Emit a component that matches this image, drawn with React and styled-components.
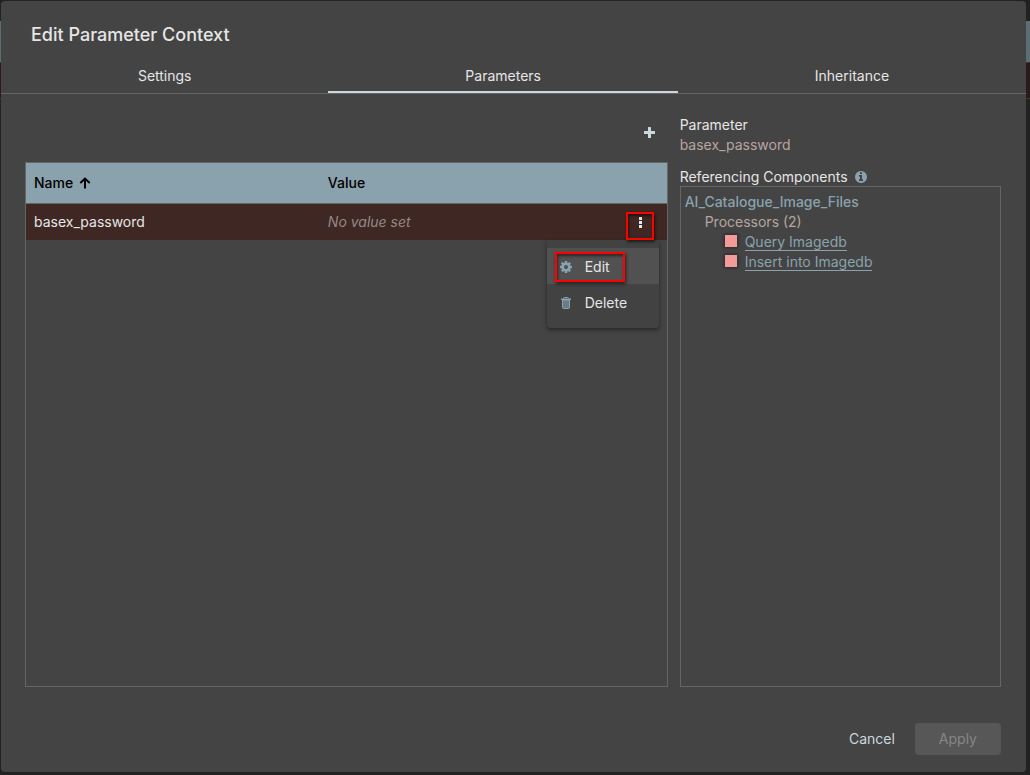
import React from 'react';
import styled, { createGlobalStyle } from 'styled-components';

const GlobalStyle = createGlobalStyle`
  *, *::before, *::after { box-sizing: border-box; }
  body {
    margin: 0;
    background: #222222;
    color: #e6e6e6;
    font-family: Inter, "Liberation Sans", sans-serif;
    font-size: 14px;
    line-height: 20px;
  }
  button { font: inherit; color: inherit; background: none; border: 0; padding: 0; }
`;

const Page = styled.div`
  position: relative;
  display: flex;
  min-height: 100vh;
  padding: 1px 4px 3px 1px;
`;

const Underlay = styled.div`
  position: absolute;
  inset: 0;
  padding-top: 21px;
`;

const UnderlayBar = styled.div`
  height: ${(p) => p.$height};
  background: ${(p) => p.$color};
  border-bottom: 1px solid #3a3a3a;
`;

const Dialog = styled.section`
  position: relative;
  flex: 1;
  display: flex;
  flex-direction: column;
  min-width: 0;
  background: #444444;
  border-radius: 4px;
`;

const Title = styled.h1`
  margin: 0;
  padding: 22px 30px 11px;
  font-size: 18px;
  line-height: 24px;
  font-weight: 500;
`;

const TabList = styled.div`
  display: flex;
  height: 36px;
  border-bottom: 1px solid #666666;
`;

const Tab = styled.button`
  flex: 1 1 auto;
  padding: 0 24px;
  border-top: 2px solid transparent;
  border-bottom: 2px solid ${(p) => (p['aria-selected'] ? '#cbd8dd' : 'transparent')};
`;

const Content = styled.div`
  flex: 1;
  display: grid;
  grid-template-columns: 2fr 1fr;
  gap: 12px;
  padding: 20px 25px 0 24px;
`;

const Column = styled.div`
  display: flex;
  flex-direction: column;
  min-width: 0;
`;

const Details = styled(Column)`
  padding-top: 1px;
`;

const Toolbar = styled.div`
  display: flex;
  justify-content: flex-end;
  margin-bottom: 12px;
`;

const IconButton = styled.button`
  display: flex;
  align-items: center;
  justify-content: center;
  width: 36px;
  height: 36px;
  color: #cbd8dd;
`;

const Listing = styled.div`
  flex: 1;
  border: 1px solid #666666;
`;

const Table = styled.table`
  width: 100%;
  table-layout: fixed;
  border-collapse: separate;
  border-spacing: 0;
`;

const HeadCell = styled.th`
  width: ${(p) => p.$width || 'auto'};
  height: 41px;
  padding: 0 8px;
  border-bottom: 1px solid #666666;
  background: #8aa2ae;
  color: #000000;
  font-weight: 500;
  text-align: left;
  svg { margin-left: 6px; vertical-align: -1px; }
`;

const Cell = styled.td`
  position: relative;
  height: 36px;
  padding: ${(p) => (p.$flush ? '0' : '0 8px')};
  background: #3f2723;
`;

const Unset = styled.span`
  font-style: italic;
  color: #938a88;
`;

const RowMenuButton = styled.button`
  display: flex;
  align-items: center;
  justify-content: center;
  width: 100%;
  height: 36px;
`;

const Menu = styled.div`
  position: absolute;
  z-index: 1;
  top: 100%;
  right: 8px;
  width: 112px;
  padding: 8px 0;
  background: #424242;
  border-radius: 0 0 4px 4px;
  box-shadow: 0 2px 4px rgba(0, 0, 0, 0.45);
`;

const MenuItem = styled.button`
  display: flex;
  align-items: center;
  gap: 12px;
  width: 100%;
  height: 36px;
  padding: 2px 12px 0;
  background: ${(p) => (p.$active ? '#515151' : 'none')};
  svg { color: #8aa2ae; }
`;

const Highlight = styled.span`
  position: absolute;
  z-index: 2;
  top: ${(p) => p.$top};
  left: ${(p) => p.$left};
  width: ${(p) => p.$width};
  height: ${(p) => p.$height};
  border: 2px solid #ff0000;
  box-shadow: 1px 2px 3px rgba(0, 0, 0, 0.6), inset 1px 2px 3px rgba(0, 0, 0, 0.5);
  pointer-events: none;
`;

const Field = styled.div`
  margin-bottom: 12px;
`;

const Muted = styled.div`
  color: #b8a5a0;
`;

const SectionLabel = styled.div`
  display: flex;
  align-items: center;
  gap: 6px;
  height: 19px;
  white-space: nowrap;
  svg { color: #8aa2ae; }
`;

const References = styled.div`
  flex: 1;
  padding: 5px 4px;
  border: 1px solid #666666;
`;

const GroupName = styled.div`
  color: #8aa2ae;
  font-weight: 500;
`;

const Indent = styled.div`
  padding-left: 20px;
`;

const ProcessorList = styled.ul`
  margin: 0;
  padding: 0 0 0 20px;
  list-style: none;
`;

const Processor = styled.li`
  display: flex;
  gap: 8px;
  height: 20px;
`;

const StoppedMark = styled.span`
  width: 12px;
  height: 12px;
  margin-top: 3px;
  background: #f49a9a;
  box-shadow: 0 0 3px 1px rgba(0, 0, 0, 0.4);
`;

const ProcessorLink = styled.a`
  height: 19px;
  color: #8aa2ae;
  text-decoration: none;
  border-bottom: 1px solid #8aa2ae;
`;

const Footer = styled.footer`
  display: flex;
  justify-content: flex-end;
  gap: 4px;
  padding: 36px 25px 17px 24px;
`;

const Action = styled.button`
  height: 32px;
  padding: 0 ${(p) => (p.disabled ? '24px' : '16px')};
  border-radius: 4px;
  color: ${(p) => (p.disabled ? '#868686' : '#cbd8dd')};
  background: ${(p) => (p.disabled ? '#575757' : 'none')};
`;

const PlusIcon = () => (
  <svg width="11" height="11" viewBox="0 0 11 11" fill="currentColor" aria-hidden="true">
    <path d="M4.5 0h2q.5 0 .5.5V4h3.500q.5 0 .5.5v2q0 .5-.5.5H7v3.500q0 .5-.5.5h-2q-.5 0-.5-.5V7H.5Q0 7 0 6.500v-2Q0 4 .5 4H4V.5Q4 0 4.500 0z" />
  </svg>
);

const SortIcon = () => (
  <svg width="12" height="12" viewBox="0 0 12 12" fill="none" stroke="currentColor" strokeWidth="2" aria-hidden="true">
    <path d="M6 11.500V2M1.300 6L6 1.600 10.700 6" />
  </svg>
);

const DotsIcon = () => (
  <svg width="3" height="11" viewBox="0 0 3 11" fill="currentColor" aria-hidden="true">
    <path d="M0 0h3v3H0zM0 4h3v3H0zM0 8h3v3H0z" />
  </svg>
);

const CogIcon = () => (
  <svg width="14" height="14" viewBox="0 0 1792 1792" fill="currentColor" aria-hidden="true">
    <path d="M1152 896q0-106-75-181t-181-75-181 75-75 181 75 181 181 75 181-75 75-181zm512-109v222q0 12-8 23t-20 13l-185 28q-19 54-39 91 35 50 107 138 10 12 10 25t-9 23q-27 37-99 108t-94 71q-12 0-26-9l-138-108q-44 23-91 38-16 136-29 186-7 28-36 28h-222q-14 0-24.500-8.500t-11.500-21.500l-28-184q-49-16-90-37l-141 107q-10 9-25 9-14 0-25-11-126-114-165-168-7-10-7-23 0-12 8-23 15-21 51-66.500t54-70.500q-27-50-41-99l-183-27q-13-2-21-12.500t-8-23.500v-222q0-12 8-23t19-13l186-28q14-46 39-92-40-57-107-138-10-12-10-24 0-10 9-23 26-36 98.500-107.500t94.500-71.500q13 0 26 10l138 107q44-23 91-38 16-136 29-186 7-28 36-28h222q14 0 24.500 8.500t11.500 21.500l28 184q49 16 90 37l142-107q9-9 24-9 13 0 25 10 129 119 165 170 7 8 7 22 0 12-8 23-15 21-51 66.500t-54 70.500q26 50 41 98l183 28q13 2 21 12.500t8 23.500z" />
  </svg>
);

const TrashIcon = () => (
  <svg width="14" height="14" viewBox="0 0 14 14" aria-hidden="true">
    <path d="M4.500 2.500Q4.500 1.500 5.500 1.500h3Q9.500 1.500 9.500 2.500" fill="none" stroke="currentColor" />
    <path d="M2 2.500h10v1.500H2z" fill="currentColor" />
    <path d="M3.500 4v7.500q0 1 1 1h5q1 0 1-1V4z" fill="currentColor" fillOpacity="0.6" stroke="currentColor" />
  </svg>
);

const InfoIcon = () => (
  <svg width="14" height="14" viewBox="0 0 1792 1792" fill="currentColor" aria-hidden="true">
    <path d="M1152 1376v-160q0-14-9-23t-23-9h-96v-512q0-14-9-23t-23-9h-320q-14 0-23 9t-9 23v160q0 14 9 23t23 9h96v320h-96q-14 0-23 9t-9 23v160q0 14 9 23t23 9h448q14 0 23-9t9-23zm-128-896v-160q0-14-9-23t-23-9h-192q-14 0-23 9t-9 23v160q0 14 9 23t23 9h192q14 0 23-9t9-23zm640 416q0 209-103 385.500t-279.500 279.500-385.500 103-385.500-103-279.500-279.500-103-385.500 103-385.500 279.500-279.500 385.500-103 385.500 103 279.500 279.500 103 385.500z" />
  </svg>
);

const tabs = ['Settings', 'Parameters', 'Inheritance'];
const processors = ['Query Imagedb', 'Insert into Imagedb'];

export default function App() {
  return (
    <Page>
      <GlobalStyle />
      <Underlay>
        <UnderlayBar $height="42px" $color="#5c6e75" />
        <UnderlayBar $height="36px" $color="#2a1a18" />
      </Underlay>
      <Dialog role="dialog" aria-labelledby="dialog-title">
        <Title id="dialog-title">Edit Parameter Context</Title>
        <TabList role="tablist">
          {tabs.map((name) => (
            <Tab key={name} type="button" role="tab" aria-selected={name === 'Parameters'}>
              {name}
            </Tab>
          ))}
        </TabList>
        <Content>
          <Column>
            <Toolbar>
              <IconButton type="button" aria-label="Add parameter"><PlusIcon /></IconButton>
            </Toolbar>
            <Listing>
              <Table>
                <thead>
                  <tr>
                    <HeadCell>Name<SortIcon /></HeadCell>
                    <HeadCell>Value</HeadCell>
                    <HeadCell $width="53px" aria-label="Actions" />
                  </tr>
                </thead>
                <tbody>
                  <tr>
                    <Cell>basex_password</Cell>
                    <Cell><Unset>No value set</Unset></Cell>
                    <Cell $flush>
                      <RowMenuButton type="button" aria-label="Row actions" aria-haspopup="menu">
                        <DotsIcon />
                      </RowMenuButton>
                      <Highlight $top="8px" $left="12px" $width="28px" $height="28px" />
                      <Menu role="menu">
                        <MenuItem type="button" role="menuitem" $active><CogIcon />Edit</MenuItem>
                        <MenuItem type="button" role="menuitem"><TrashIcon />Delete</MenuItem>
                        <Highlight $top="12px" $left="8px" $width="70px" $height="30px" />
                      </Menu>
                    </Cell>
                  </tr>
                </tbody>
              </Table>
            </Listing>
          </Column>
          <Details>
            <Field>
              <div>Parameter</div>
              <Muted>basex_password</Muted>
            </Field>
            <SectionLabel>Referencing Components<InfoIcon /></SectionLabel>
            <References>
              <GroupName>AI_Catalogue_Image_Files</GroupName>
              <Indent>
                <Muted>Processors (2)</Muted>
                <ProcessorList>
                  {processors.map((name) => (
                    <Processor key={name}>
                      <StoppedMark />
                      <ProcessorLink href="#">{name}</ProcessorLink>
                    </Processor>
                  ))}
                </ProcessorList>
              </Indent>
            </References>
          </Details>
        </Content>
        <Footer>
          <Action type="button">Cancel</Action>
          <Action type="button" disabled>Apply</Action>
        </Footer>
      </Dialog>
    </Page>
  );
}
